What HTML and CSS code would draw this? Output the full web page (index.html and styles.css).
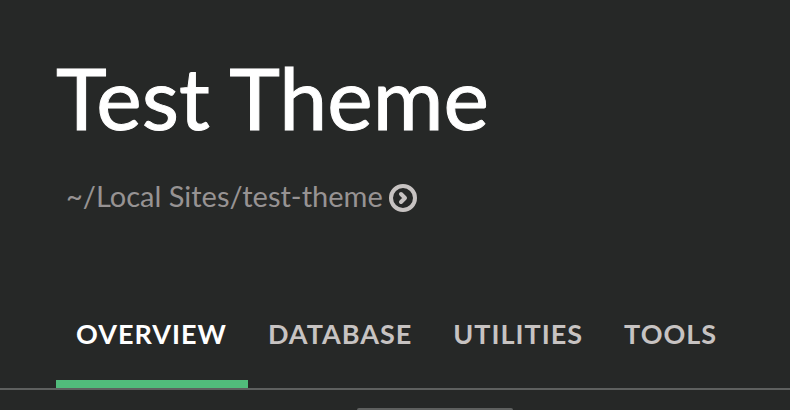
FILE: index.html
```html
<!DOCTYPE html>
<html lang="en">
<head>
<meta charset="utf-8">
<title>Test Theme</title>
<link rel="stylesheet" href="styles.css">
</head>
<body>
<header class="site-header">
  <h1 class="site-title">Test Theme</h1>
  <a class="site-path" href="#">
    <span>~/Local Sites/test-theme</span>
    <svg class="path-icon" viewBox="0 0 28 28" aria-hidden="true">
      <circle cx="14" cy="14" r="12"/>
      <path d="M12 10l4 4-4 4"/>
    </svg>
  </a>
</header>
<nav class="tabs">
  <a class="tab tab-active" href="#">OVERVIEW</a>
  <a class="tab" href="#">DATABASE</a>
  <a class="tab" href="#">UTILITIES</a>
  <a class="tab" href="#">TOOLS</a>
</nav>
<main class="panel">
  <div class="panel-handle"></div>
</main>
</body>
</html>
```
FILE: styles.css
```css
* {
  box-sizing: border-box;
}

body {
  margin: 0;
  min-height: 100vh;
  display: flex;
  flex-direction: column;
  overflow: hidden;
  background: #262827;
  font-family: Lato, "Open Sans", sans-serif;
}

.site-header {
  padding: 47px 56px 0;
}

.site-title {
  margin: 0;
  color: #fff;
  font-size: 86px;
  font-weight: 400;
  line-height: 100px;
  -webkit-text-stroke: 1px #fff;
}

.site-path {
  display: inline-flex;
  align-items: center;
  gap: 6px;
  margin-top: 33px;
  padding-left: 10px;
  color: #979393;
  font-size: 29px;
  line-height: 32px;
  text-decoration: none;
}

.site-path span {
  padding-bottom: 4px;
}

.path-icon {
  width: 28px;
  height: 28px;
  fill: none;
  stroke: #c7c3c2;
  stroke-width: 4;
  stroke-linecap: round;
  stroke-linejoin: round;
}

.tabs {
  display: flex;
  margin-top: 72px;
  padding-left: 56px;
  border-bottom: 2px solid #5e605f;
}

.tab {
  padding: 28px 21px 28px 20px;
  border-bottom: 8px solid transparent;
  color: #c7c3c2;
  font-size: 27px;
  font-weight: 700;
  line-height: 36px;
  letter-spacing: 1px;
  text-decoration: none;
}

.tab-active {
  border-bottom-color: #51bb7b;
  color: #fff;
}

.panel {
  flex: 1;
  padding-top: 18px;
}

.panel-handle {
  width: 156px;
  height: 2px;
  margin-left: 357px;
  border-radius: 2px 2px 0 0;
  background: #5e605f;
}
```
